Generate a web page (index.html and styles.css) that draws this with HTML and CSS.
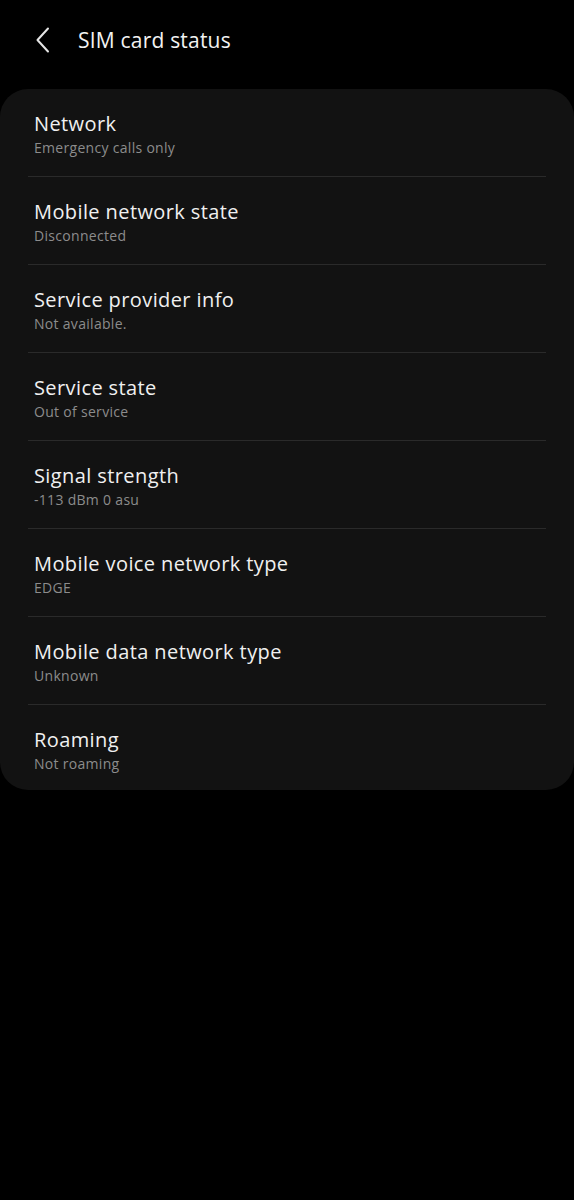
FILE: index.html
```html
<!DOCTYPE html>
<html lang="en">
<head>
    <meta charset="UTF-8">
    <meta name="viewport" content="width=device-width, initial-scale=1.0">
    <title>SIM card status</title>
    <link rel="stylesheet" href="styles.css">
</head>
<body>
    <div class="header">
        <svg class="back" width="16" height="26" viewBox="0 0 16 26">
            <path d="M13 1.5 L2.5 13 L13 24.5" fill="none" stroke="#e6e6e6" stroke-width="2" stroke-linecap="round" stroke-linejoin="round"/>
        </svg>
        <h1>SIM card status</h1>
    </div>

    <div class="card">
        <div class="row">
            <p class="title">Network</p>
            <p class="sub">Emergency calls only</p>
        </div>
        <div class="row">
            <p class="title">Mobile network state</p>
            <p class="sub">Disconnected</p>
        </div>
        <div class="row">
            <p class="title">Service provider info</p>
            <p class="sub">Not available.</p>
        </div>
        <div class="row">
            <p class="title">Service state</p>
            <p class="sub">Out of service</p>
        </div>
        <div class="row">
            <p class="title">Signal strength</p>
            <p class="sub">-113 dBm 0 asu</p>
        </div>
        <div class="row">
            <p class="title">Mobile voice network type</p>
            <p class="sub">EDGE</p>
        </div>
        <div class="row">
            <p class="title">Mobile data network type</p>
            <p class="sub">Unknown</p>
        </div>
        <div class="row last">
            <p class="title">Roaming</p>
            <p class="sub">Not roaming</p>
        </div>
    </div>
</body>
</html>
```

FILE: styles.css
```css
body {
    margin: 0;
    background-color: #000;
    font-family: "Open Sans", "DejaVu Sans", sans-serif;
    color: #f0f0f0;
}
.header {
    height: 89px;
    display: flex;
    align-items: center;
    padding-left: 35px;
    box-sizing: border-box;
    padding-bottom: 9px;
}
.back {
    display: block;
}
.header h1 {
    margin: 0 0 0 27px;
    font-size: 21px;
    font-weight: 400;
    letter-spacing: 0.2px;
    color: #f2f2f2;
}
.card {
    background-color: #121212;
    border-radius: 28px;
}
.row {
    margin: 0 28px;
    padding: 23px 0 19px 6px;
    border-bottom: 1px solid #2a2a2a;
}
.row.last {
    border-bottom: none;
    padding-bottom: 17px;
}
.title {
    margin: 0;
    font-size: 20px;
    line-height: 24px;
    letter-spacing: 0.4px;
    color: #f0f0f0;
}
.sub {
    margin: 3px 0 0;
    font-size: 14px;
    line-height: 18px;
    letter-spacing: 0.3px;
    color: #8c8c8c;
}
```
